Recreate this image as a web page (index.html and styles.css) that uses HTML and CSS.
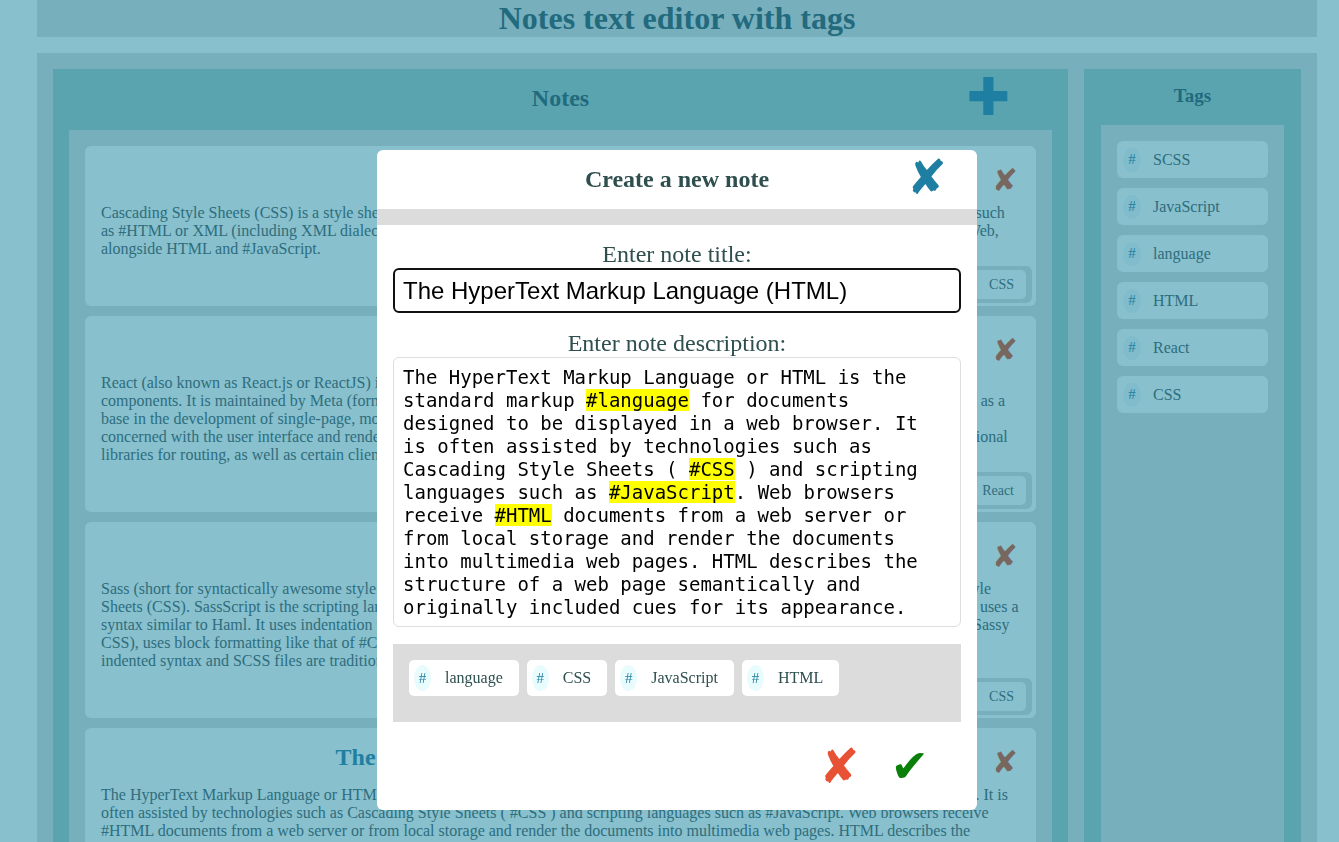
FILE: index.html
```html
<!DOCTYPE html>
<html lang="en">
<head>
<meta charset="utf-8">
<title>Notes text editor with tags</title>
<link rel="stylesheet" href="styles.css">
</head>
<body>
<div class="app">
  <header class="app-header"><h1>Notes text editor with tags</h1></header>
  <main class="app-main">
    <section class="notes">
      <div class="notes-head">
        <h2>Notes</h2>
        <span class="add-btn">✚</span>
      </div>
      <div class="notes-list">
        <article class="note">
          <div class="note-head"><span></span><h3>Cascading Style Sheets</h3><span class="del">✘</span></div>
          <p class="note-text">Cascading Style Sheets (CSS) is a style sheet language used for describing the presentation of a document written in a markup language such as #HTML or XML (including XML dialects such as SVG, MathML or XHTML). CSS is a cornerstone technology of the World Wide Web, alongside HTML and #JavaScript.</p>
          <div class="note-tags"><span class="ntag"><span class="hash">#</span>CSS</span></div>
        </article>
        <article class="note">
          <div class="note-head"><span></span><h3>React</h3><span class="del">✘</span></div>
          <p class="note-text">React (also known as React.js or ReactJS) is a free and open-source front-end JavaScript library for building user interfaces based on UI components. It is maintained by Meta (formerly Facebook) and a community of individual developers and companies. React can be used as a base in the development of single-page, mobile, or server-rendered applications with frameworks like Next.js. However, React is only concerned with the user interface and rendering components to the DOM, so creating React applications usually requires the use of additional libraries for routing, as well as certain client-side functionality.</p>
          <div class="note-tags"><span class="ntag"><span class="hash">#</span>React</span></div>
        </article>
        <article class="note">
          <div class="note-head"><span></span><h3>Sass</h3><span class="del">✘</span></div>
          <p class="note-text">Sass (short for syntactically awesome style sheets) is a preprocessor scripting language that is interpreted or compiled into Cascading Style Sheets (CSS). SassScript is the scripting language itself. Sass consists of two syntaxes. The original syntax, called "the indented syntax," uses a syntax similar to Haml. It uses indentation to separate code blocks and newline characters to separate rules. The newer syntax, "SCSS" (Sassy CSS), uses block formatting like that of #CSS. It uses braces to denote code blocks and semicolons to separate rules within a block. The indented syntax and SCSS files are traditionally given the extensions .sass and .scss, respectively.</p>
          <div class="note-tags"><span class="ntag"><span class="hash">#</span>CSS</span></div>
        </article>
        <article class="note">
          <div class="note-head"><span></span><h3>The HyperText Markup Language (HTML)</h3><span class="del">✘</span></div>
          <p class="note-text">The HyperText Markup Language or HTML is the standard markup #language for documents designed to be displayed in a web browser. It is often assisted by technologies such as Cascading Style Sheets ( #CSS ) and scripting languages such as #JavaScript. Web browsers receive #HTML documents from a web server or from local storage and render the documents into multimedia web pages. HTML describes the structure of a web page semantically and originally included cues for its appearance.</p>
          <div class="note-tags"><span class="ntag"><span class="hash">#</span>HTML</span></div>
        </article>
      </div>
    </section>
    <aside class="tags">
      <h2>Tags</h2>
      <ul class="tag-list">
        <li class="tag"><span class="hash">#</span>SCSS</li>
        <li class="tag"><span class="hash">#</span>JavaScript</li>
        <li class="tag"><span class="hash">#</span>language</li>
        <li class="tag"><span class="hash">#</span>HTML</li>
        <li class="tag"><span class="hash">#</span>React</li>
        <li class="tag"><span class="hash">#</span>CSS</li>
      </ul>
    </aside>
  </main>
</div>

<div class="modal">
  <div class="modal-head">
    <span></span>
    <h2>Create a new note</h2>
    <span class="close">✘</span>
  </div>
  <div class="modal-sep"></div>
  <div class="modal-body">
    <label class="field-label" for="title">Enter note title:</label>
    <div class="title-input" id="title">The HyperText Markup Language (HTML)</div>
    <label class="field-label">Enter note description:</label>
    <div class="desc">The HyperText Markup Language or HTML is the standard markup <mark>#language</mark> for documents designed to be displayed in a web browser. It is often assisted by technologies such as Cascading Style Sheets ( <mark>#CSS</mark> ) and scripting languages such as <mark>#JavaScript</mark>. Web browsers receive <mark>#HTML</mark> documents from a web server or from local storage and render the documents into multimedia web pages. HTML describes the structure of a web page semantically and originally included cues for its appearance.</div>
    <div class="modal-tags">
      <span class="mtag"><span class="mhash">#</span>language</span>
      <span class="mtag"><span class="mhash">#</span>CSS</span>
      <span class="mtag"><span class="mhash">#</span>JavaScript</span>
      <span class="mtag"><span class="mhash">#</span>HTML</span>
    </div>
    <div class="modal-actions">
      <span class="cancel">✘</span>
      <span class="ok">✔</span>
    </div>
  </div>
</div>
</body>
</html>
```
FILE: styles.css
```css
html, body {
  margin: 0;
  padding: 0;
  height: 100%;
  overflow: hidden;
}
body {
  background: #88c0cd;
  font-family: "Liberation Serif", "Times New Roman", serif;
  color: #2e6d7e;
}
.app {
  width: 1280px;
  margin-left: 37px;
}
.app-header {
  height: 37px;
  background: #77afbc;
  display: flex;
  align-items: center;
  justify-content: center;
}
.app-header h1 {
  margin: 0;
  font-size: 32px;
  line-height: 37px;
  color: #226a7e;
  font-weight: bold;
}
.app-main {
  margin-top: 16px;
  background: #77afbc;
  padding: 16px;
  display: flex;
  gap: 16px;
  align-items: flex-start;
  height: 900px;
}
.notes {
  width: 1015px;
  background: #5aa4b0;
  height: 900px;
}
.notes-head {
  height: 61px;
  display: grid;
  grid-template-columns: 1fr auto 1fr;
  align-items: center;
}
.notes-head h2 {
  grid-column: 2;
  margin: 0;
  font-size: 24px;
  color: #226a7e;
  margin-top: -2px;
}
.add-btn {
  justify-self: end;
  margin-right: 58px;
  font-family: "DejaVu Sans", sans-serif;
  font-size: 52px;
  line-height: 1;
  color: #1f7fa2;
  margin-top: -6px;
}
.notes-list {
  margin: 0 16px;
  background: #77afbc;
  padding: 16px;
  display: flex;
  flex-direction: column;
  gap: 10px;
  height: 800px;
}
.note {
  background: #88c0cd;
  border-radius: 6px;
  padding: 0 16px 3px 16px;
  display: flex;
  flex-direction: column;
}
.note-head {
  height: 58px;
  display: grid;
  grid-template-columns: 1fr auto 1fr;
  align-items: center;
}
.note-head h3 {
  grid-column: 2;
  margin: 0;
  font-size: 24px;
  color: #1f7fa2;
}
.del {
  justify-self: end;
  margin-right: 2px;
  margin-top: 10px;
  font-family: "DejaVu Sans", sans-serif;
  font-size: 31px;
  line-height: 1;
  color: #77675f;
}
.note-text {
  margin: 0;
  font-size: 16px;
  line-height: 18px;
  color: #2e6d7e;
}
.note-tags {
  align-self: flex-end;
  margin: 8px -12px 0 0;
  background: #77afbc;
  border-radius: 6px;
  padding: 4px 6px 4px 4px;
  display: flex;
}
.ntag {
  background: #88c0cd;
  border-radius: 5px;
  height: 29px;
  padding: 0 12px 0 6px;
  display: flex;
  align-items: center;
  gap: 12px;
  font-size: 14px;
  color: #2e6d7e;
}
.ntag .hash {
  color: #1f7fa2;
}
.tags {
  width: 217px;
  background: #5aa4b0;
  height: 900px;
}
.tags h2 {
  margin: 0;
  height: 56px;
  line-height: 54px;
  text-align: center;
  font-size: 19px;
  color: #226a7e;
}
.tag-list {
  list-style: none;
  margin: 0 17px;
  padding: 16px;
  background: #77afbc;
  display: flex;
  flex-direction: column;
  gap: 10px;
  height: 800px;
}
.tag {
  height: 37px;
  background: #88c0cd;
  border-radius: 6px;
  display: flex;
  align-items: center;
  padding-left: 6px;
  font-size: 16px;
  color: #2e6d7e;
}
.tag .hash {
  width: 18px;
  height: 24px;
  border-radius: 50%;
  background: #80bccb;
  color: #1f7fa2;
  display: inline-flex;
  align-items: center;
  justify-content: center;
  font-size: 15px;
  margin-right: 12px;
}

/* modal */
.modal {
  position: fixed;
  top: 150px;
  left: 377px;
  width: 600px;
  height: 660px;
  background: #fff;
  border-radius: 6px;
  display: flex;
  flex-direction: column;
  color: #2f4f4f;
}
.modal-head {
  height: 59px;
  display: grid;
  grid-template-columns: 1fr auto 1fr;
  align-items: center;
}
.modal-head h2 {
  grid-column: 2;
  margin: 0;
  font-size: 24px;
  color: #2f4f4f;
}
.close {
  justify-self: end;
  margin-right: 30px;
  font-family: "DejaVu Sans", sans-serif;
  font-size: 48px;
  line-height: 1;
  color: #1f7fa2;
  margin-top: -6px;
}
.modal-sep {
  height: 16px;
  background: #dcdcdc;
}
.modal-body {
  padding: 16px 16px 0 16px;
  display: flex;
  flex-direction: column;
}
.field-label {
  display: block;
  text-align: center;
  font-size: 24px;
  line-height: 27px;
  color: #2f4f4f;
}
.title-input {
  height: 41px;
  border: 2px solid #111;
  border-radius: 6px;
  padding: 0 8px;
  font-family: "Liberation Sans", Arial, sans-serif;
  font-size: 24px;
  line-height: 41px;
  color: #000;
  margin-bottom: 17px;
}
.desc {
  border: 1px solid #dedede;
  border-radius: 6px;
  padding: 8px 9px 7px 9px;
  font-family: "DejaVu Sans Mono", monospace;
  font-size: 19px;
  line-height: 23px;
  color: #000;
}
.desc mark {
  background: #ffff00;
  color: #000;
}
.modal-tags {
  margin-top: 17px;
  background: #dcdcdc;
  min-height: 78px;
  box-sizing: border-box;
  padding: 16px;
  display: flex;
  align-items: flex-start;
  gap: 8px;
}
.mtag {
  background: #fff;
  border-radius: 5px;
  height: 36px;
  display: flex;
  align-items: center;
  padding: 0 16px 0 5px;
  font-size: 16px;
  color: #2f4f4f;
}
.mhash {
  width: 17px;
  height: 26px;
  border-radius: 50%;
  background: #e8fbfd;
  color: #1f7fa2;
  display: inline-flex;
  align-items: center;
  justify-content: center;
  font-size: 15px;
  margin-right: 14px;
}
.modal-actions {
  height: 88px;
  display: flex;
  justify-content: flex-end;
  align-items: center;
  gap: 31px;
  padding-right: 32px;
}
.cancel {
  font-family: "DejaVu Sans", sans-serif;
  font-size: 48px;
  line-height: 1;
  color: #e65233;
}
.ok {
  font-family: "DejaVu Sans", sans-serif;
  font-size: 46px;
  line-height: 1;
  color: #0a800a;
}
```
